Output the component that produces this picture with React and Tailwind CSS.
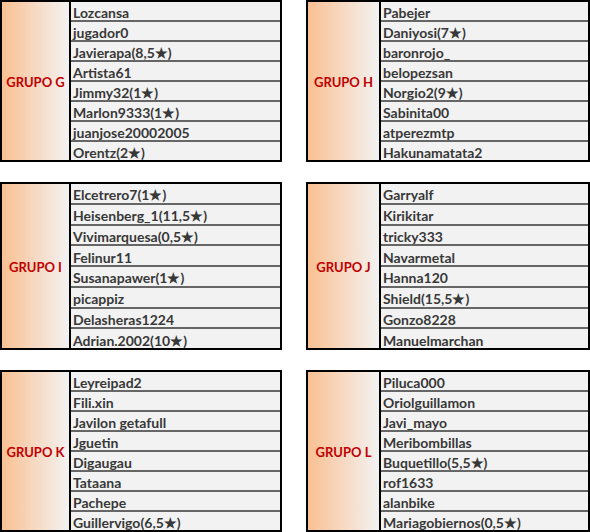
import React from "react";

const groups = [
  { name: "GRUPO G", h: "h-[162px]", players: ["Lozcansa", "jugador0", "Javierapa(8,5★)", "Artista61", "Jimmy32(1★)", "Marlon9333(1★)", "juanjose20002005", "Orentz(2★)"] },
  { name: "GRUPO H", h: "h-[162px]", players: ["Pabejer", "Daniyosi(7★)", "baronrojo_", "belopezsan", "Norgio2(9★)", "Sabinita00", "atperezmtp", "Hakunamatata2"] },
  { name: "GRUPO I", h: "h-[168px]", players: ["Elcetrero7(1★)", "Heisenberg_1(11,5★)", "Vivimarquesa(0,5★)", "Felinur11", "Susanapawer(1★)", "picappiz", "Delasheras1224", "Adrian.2002(10★)"] },
  { name: "GRUPO J", h: "h-[168px]", players: ["Garryalf", "Kirikitar", "tricky333", "Navarmetal", "Hanna120", "Shield(15,5★)", "Gonzo8228", "Manuelmarchan"] },
  { name: "GRUPO K", h: "h-[162px]", players: ["Leyreipad2", "Fili.xin", "Javilon getafull", "Jguetin", "Digaugau", "Tataana", "Pachepe", "Guillervigo(6,5★)"] },
  { name: "GRUPO L", h: "h-[162px]", players: ["Piluca000", "Oriolguillamon", "Javi_mayo", "Meribombillas", "Buquetillo(5,5★)", "rof1633", "alanbike", "Mariagobiernos(0,5★)"] },
];

function Group({ g, right }) {
  return (
    <div className={`flex ${g.h} border-2 border-black ${right ? "w-[284px]" : "w-[282px]"}`}>
      <div className={`${right ? "w-[73px]" : "w-[69px]"} shrink-0 flex items-center justify-center bg-gradient-to-r from-[#f9c092] to-[#f2f2f2] border-r-2 border-black`}>
        <span className="text-[#c00000] font-bold text-[13px] pt-[4px]">{g.name}</span>
      </div>
      <div className="flex-1 flex flex-col bg-[#f2f2f2]">
        {g.players.map((p, i) => (
          <div key={i} className={`flex-1 flex items-center pl-[2px] pt-[4px] ${i < 7 ? "border-b-2 border-[#666666]" : ""}`}>
            <span className="text-[#383838] font-bold text-[14px] leading-none whitespace-nowrap">{p}</span>
          </div>
        ))}
      </div>
    </div>
  );
}

export default function App() {
  return (
    <div className="w-[590px] h-[532px] bg-white overflow-hidden" style={{ fontFamily: "Lato, 'Open Sans', sans-serif" }}>
      <div className="grid grid-cols-[282px_284px] gap-x-[24px] gap-y-[20px]">
        {groups.map((g, i) => (
          <Group key={i} g={g} right={i % 2 === 1} />
        ))}
      </div>
    </div>
  );
}
